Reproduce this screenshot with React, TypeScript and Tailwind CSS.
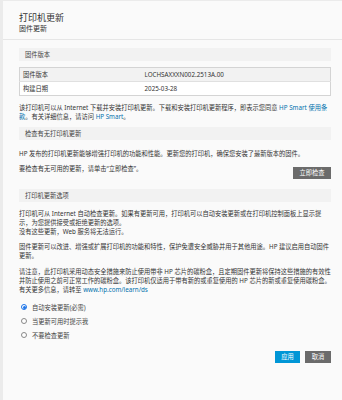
import React, { useState } from 'react';

const options = [
  { id: 'auto', label: '自动安装更新(必需)' },
  { id: 'notify', label: '当更新可用时提示我' },
  { id: 'never', label: '不要检查更新' },
];

function SectionHeader({ title }: { title: string }) {
  return (
    <div className="h-[13px] bg-[#f2f2f2] pl-[6px] text-[6.25px] leading-[13px] text-[#444]">{title}</div>
  );
}

export default function App() {
  const [choice, setChoice] = useState('auto');

  return (
    <div className="min-h-[400px] bg-[#ebebeb] pl-[3px] pt-px font-['Noto_Sans','Noto_Sans_CJK_SC',sans-serif] text-[#333]">
      <div className="min-h-[399px] bg-[#fafafa]">
        {/* header */}
        <div className="h-[39px] border-b border-[#e6e6e6] pl-[16px] pt-[10px]">
          <div className="text-[9px] leading-[13px] text-[#333]">打印机更新</div>
          <div className="text-[7px] leading-[10px] text-[#333]">固件更新</div>
        </div>

        <div className="pl-[16px] pr-[11px] pt-[8px] text-[6.25px] leading-[9px]">
          <SectionHeader title="固件版本" />

          <table className="mt-[6px] w-full border border-[#d4d4d4] border-collapse">
            <tbody>
              <tr className="h-[14px] bg-[#f2f2f2] border-b border-[#e0e0e0]">
                <td className="w-[125px] pl-[3px]">固件版本</td>
                <td>LOCHSAXXXN002.2513A.00</td>
              </tr>
              <tr className="h-[14px] bg-white">
                <td className="pl-[3px]">构建日期</td>
                <td>2025-03-28</td>
              </tr>
            </tbody>
          </table>

          <p className="mt-[7px]">
            该打印机可以从 Internet 下载并安装打印机更新。下载和安装打印机更新程序，即表示您同意{' '}
            <span className="text-[#0171ad]">HP Smart 使用条款</span>。有关详细信息，请访问{' '}
            <span className="text-[#0171ad]">HP Smart</span>。
          </p>

          <div className="mt-[6px]">
            <SectionHeader title="检查有无打印机更新" />
          </div>
          <p className="mt-[9px]">HP 发布的打印机更新能够增强打印机的功能和性能。更新您的打印机，确保您安装了最新版本的固件。</p>
          <div className="mt-[6px] flex items-start justify-between">
            <p>要检查有无可用的更新，请单击“立即检查”。</p>
            <button className="mt-[3px] h-[12px] w-[38px] bg-[#6b6b6b] text-[6.25px] leading-[12px] text-white">立即检查</button>
          </div>

          <div className="mt-[10px]">
            <SectionHeader title="打印机更新选项" />
          </div>
          <p className="mt-[7px]">
            打印机可从 Internet 自动检查更新。如果有更新可用，打印机可以自动安装更新或在打印机控制面板上显示提示，为您提供接受或拒绝更新的选项。
            <br />
            没有这些更新，Web 服务将无法运行。
          </p>
          <p className="mt-[6px]">固件更新可以改进、增强或扩展打印机的功能和特性，保护免遭安全威胁并用于其他用途。HP 建议启用自动固件更新。</p>
          <p className="mt-[7px]">
            请注意，此打印机采用动态安全措施来防止使用带非 HP 芯片的碳粉盒，且定期固件更新将保持这些措施的有效性并防止使用之前可正常工作的碳粉盒。该打印机仅适用于带有新的或重复使用的 HP 芯片的新或重复使用碳粉盒。有关更多信息，请转至{' '}
            <span className="text-[#0171ad]">www.hp.com/learn/ds</span>
          </p>

          <div className="mt-[8px] flex flex-col gap-[4px] pl-[2px]">
            {options.map((o) => (
              <label key={o.id} className="flex h-[10px] items-center gap-[5px]" onClick={() => setChoice(o.id)}>
                <span
                  className={
                    choice === o.id
                      ? 'flex h-[6px] w-[6px] items-center justify-center rounded-full border border-[#1a73e8] bg-white'
                      : 'h-[6px] w-[6px] rounded-full border border-[#888] bg-white'
                  }
                >
                  {choice === o.id && <span className="h-[3px] w-[3px] rounded-full bg-[#1a73e8]" />}
                </span>
                <span className="text-[#444]">{o.label}</span>
              </label>
            ))}
          </div>

          <div className="mt-[11px] flex justify-end gap-[5px]">
            <button className="h-[12px] w-[25px] bg-[#0096d6] text-[6.25px] leading-[12px] text-white">应用</button>
            <button className="h-[12px] w-[26px] bg-[#6b6b6b] text-[6.25px] leading-[12px] text-white">取消</button>
          </div>
        </div>
      </div>
    </div>
  );
}
